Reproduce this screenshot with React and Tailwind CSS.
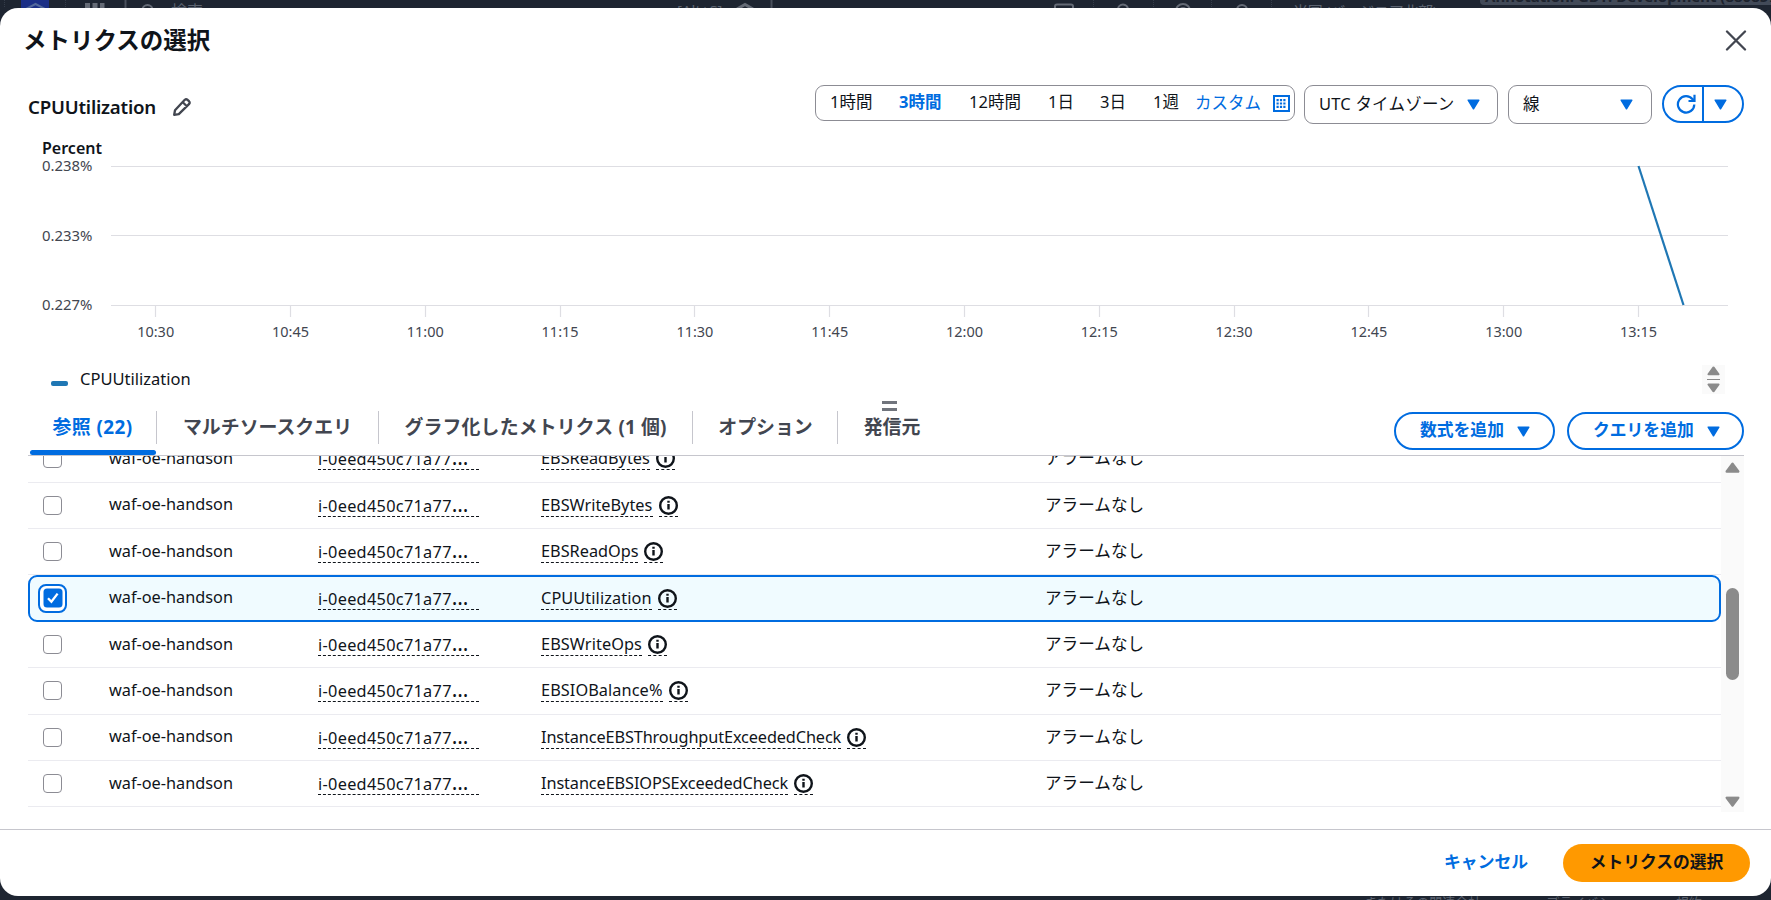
import React, { useState } from 'react';

const METRICS = [
  { name: 'EBSReadBytes', width: 'w-[109px]' },
  { name: 'EBSWriteBytes', width: 'w-[112px]' },
  { name: 'EBSReadOps', width: 'w-[97px]' },
  { name: 'CPUUtilization', width: 'w-[111px] tracking-[0.1px]' },
  { name: 'EBSWriteOps', width: 'w-[101px] tracking-[0.08px]' },
  { name: 'EBSIOBalance%', width: 'w-[122px] tracking-[0.08px]' },
  { name: 'InstanceEBSThroughputExceededCheck', width: 'w-[300px] tracking-[-0.12px]' },
  { name: 'InstanceEBSIOPSExceededCheck', width: 'w-[247px] tracking-[-0.1px]' },
];

const RANGES = [
  { label: '1時間', width: 'w-[69px]' },
  { label: '3時間', width: 'w-[70px]' },
  { label: '12時間', width: 'w-[79px]' },
  { label: '1日', width: 'w-[52px]' },
  { label: '3日', width: 'w-[53px]' },
  { label: '1週', width: 'w-[42px]' },
];

const TABS = [
  { label: '参照 (22)', width: 'w-[127px] pr-[2px] tracking-[0.4px]' },
  { label: 'マルチソースクエリ', width: 'w-[222px] pr-px' },
  { label: 'グラフ化したメトリクス (1 個)', width: 'w-[314px] pr-px tracking-[0.15px]' },
  { label: 'オプション', width: 'w-[145px]' },
  { label: '発信元', width: 'w-[108px]' },
];

const TIMES = ['10:30', '10:45', '11:00', '11:15', '11:30', '11:45', '12:00', '12:15', '12:30', '12:45', '13:00', '13:15'];

function Caret({ className = '' }) {
  return (
    <svg className={`shrink-0 ${className}`} width="13" height="11" viewBox="0 0 13 11" fill="currentColor" stroke="currentColor" strokeWidth="1.5" strokeLinejoin="round">
      <path d="M1.2 1.2h10.6L6.5 9.8z" />
    </svg>
  );
}

function ScrollArrow({ down = false, size = 15 }) {
  return (
    <svg className={down ? 'rotate-180' : ''} width={size} height={size * 0.75} viewBox="0 0 16 12" fill="#8b8b8b" stroke="#8b8b8b" strokeWidth="2.5" strokeLinejoin="round">
      <path d="M8 1.8 14.2 10.2H1.8z" />
    </svg>
  );
}

function InfoIcon() {
  return (
    <svg className="shrink-0" width="19" height="19" viewBox="0 0 19 19" fill="none" stroke="#0f141a" strokeWidth="2.4">
      <circle cx="9.5" cy="9.5" r="8.3" />
      <path d="M9.5 8v5.6M9.5 4.7v2.1" />
    </svg>
  );
}

function Checkbox({ checked }) {
  if (checked) {
    return (
      <span className="-ml-[5px] flex size-[29px] items-center justify-center rounded-[8px] border-[2.5px] border-[#006ce0] bg-white">
        <svg width="20" height="20" viewBox="0 0 20 20">
          <rect x="0.5" y="0.5" width="19" height="19" rx="3.5" fill="#006ce0" />
          <path d="m5 10.2 3.4 3.6 6.2-8.2" fill="none" stroke="#fff" strokeWidth="2.3" />
        </svg>
      </span>
    );
  }
  return <span className="block size-[19px] rounded-[4px] border border-[#8c8c94] bg-white" />;
}

function BackgroundNav() {
  return (
    <div className="relative h-2 overflow-hidden text-[13px] leading-none text-[#5c6370]">
      <svg className="absolute left-0 top-0" width="1771" height="8" fill="none" stroke="#656b76" strokeWidth="2">
        <rect x="21" y="-16" width="28" height="26" rx="3" fill="#1b2f86" stroke="none" />
        <path d="m26 9 9.500-5L45 9" stroke="#53699b" />
        <path d="M85 5.500h5M92.500 5.500h5M100 5.500h4.500" strokeWidth="5" />
        <path d="M125.500-2v12M771.500-2v12" stroke="#4a515d" />
        <circle cx="147.500" cy="10" r="5" />
        <path d="m737 9 8-4.500 8 4.500" strokeWidth="3" />
        <rect x="1055" y="4.500" width="18" height="12" rx="2" />
        <circle cx="1123" cy="9.500" r="5" />
        <circle cx="1183" cy="11" r="7" />
        <circle cx="1183" cy="11" r="3" />
        <circle cx="1242" cy="10" r="5" />
        <path d="M4.500 0v8M65.500 0v8M1093.500 0v8M1153.500 0v8M1211.500 0v8M1271.500 0v8" stroke="#343c49" strokeWidth="1" strokeDasharray="1 1" />
      </svg>
      <span className="absolute left-[171px] top-[3px] text-[16px]">検索</span>
      <span className="absolute left-[677px] top-[3px] text-[15px]">[Alt+S]</span>
      <span className="absolute left-[1293px] top-[4px] text-[15px] tracking-[-0.3px] whitespace-nowrap">米国 (バージニア北部)</span>
      <div className="absolute right-0 top-0 h-[5px] w-[291px] overflow-hidden rounded-bl-[4px] bg-[#424a58]">
        <span className="absolute -top-[11px] left-[5px] text-[15px] font-bold whitespace-nowrap text-[#1c222d]">Annotation: GDT: Development (88085784)</span>
      </div>
    </div>
  );
}

function MetricChart() {
  return (
    <svg className="block" width="1771" height="210" viewBox="0 140 1771 210">
      <text x="42" y="153.500" fontSize="15.500" fontWeight="600" fill="#0f141a" textLength="60" lengthAdjust="spacingAndGlyphs">Percent</text>
      <g fontSize="14" fill="#424650">
        {['0.238%', '0.233%', '0.227%'].map((value, i) => (
          <text key={value} x="42" y={171 + i * 69.5} textLength="50.500" lengthAdjust="spacingAndGlyphs">{value}</text>
        ))}
        {TIMES.map((time, i) => (
          <text key={time} x={155.7 + i * 134.8} y="337" textAnchor="middle" textLength="37" lengthAdjust="spacingAndGlyphs">{time}</text>
        ))}
      </g>
      <g stroke="#dedee3" strokeWidth="1.200">
        <path d="M111 166.500H1728M111 235.500H1728M111 305.500H1728" />
        {TIMES.map((time, i) => (
          <path key={time} d={`M${Math.round(155.2 + i * 134.8) + 0.5} 306v11`} />
        ))}
      </g>
      <path d="M1638.500 166 1683.500 305" fill="none" stroke="#1f77b4" strokeWidth="2.200" />
    </svg>
  );
}

function Toolbar() {
  const [range, setRange] = useState('3時間');
  return (
    <div className="flex h-[68px] items-start pt-[13px] pl-7 pr-[27px] text-[16.5px]">
      <h2 className="flex h-[45px] w-[787px] items-center gap-[18px] text-[18.7px] font-semibold">
        <span className="w-[127px] tracking-[-0.22px] whitespace-nowrap">CPUUtilization</span>
        <svg className="-mt-[2px]" width="18" height="18" viewBox="0 0 18 18" fill="none" stroke="#424650" strokeWidth="2.300" strokeLinejoin="round">
          <path d="M1.200 16.800 2 12.300 11.800 1.800Q13 .8 14.500 1.800L16 3.200Q17.200 4.500 16.200 5.900L5.800 16.100ZM9.800 4.200l4 4" />
        </svg>
      </h2>
      <div className="flex h-[36px] w-[480px] rounded-[9px] border border-[#8c8c94] pl-[14px]">
        {RANGES.map(({ label, width }) => (
          <button
            key={label}
            onClick={() => setRange(label)}
            className={`${width} shrink-0 pb-[1px] text-left whitespace-nowrap ${range === label ? 'font-bold text-[#006ce0]' : ''}`}
          >
            {label}
          </button>
        ))}
        <span className="w-[78px] leading-[33px] whitespace-nowrap text-[#006ce0]">カスタム</span>
        <svg className="mt-[9px] shrink-0" width="17" height="17" viewBox="0 0 17 17">
          <rect x="1" y="1" width="15" height="15" fill="none" stroke="#006ce0" strokeWidth="2" />
          <path d="M3.500 5.200h10M3.500 8.500h10M3.500 11.800h10" stroke="#006ce0" strokeWidth="2.200" strokeDasharray="2.200 1.200" />
        </svg>
      </div>
      <button className="ml-[9px] flex h-[39px] w-[194px] items-center rounded-[9px] border border-[#8c8c94] pl-[14px] pr-[17px]">
        <span className="tracking-[0.2px] whitespace-nowrap">UTC タイムゾーン</span>
        <Caret className="ml-auto text-[#006ce0]" />
      </button>
      <button className="ml-[10px] flex h-[39px] w-[144px] items-center justify-between rounded-[9px] border border-[#8c8c94] pl-[14px] pr-[18px]">
        線
        <Caret className="text-[#006ce0]" />
      </button>
      <div className="ml-[10px] flex h-[38px] w-[82px] rounded-full border-2 border-[#006ce0] text-[#006ce0]">
        <button className="flex w-[40px] items-center justify-center border-r-2 border-[#006ce0] pl-[5px]">
          <svg width="20" height="20" viewBox="0 0 20 20" fill="none" stroke="currentColor" strokeWidth="2.200">
            <path d="M18.300 10.500A8.200 8.200 0 1 1 16.600 5.300L17.800 7M18.500.7V7H12.500" />
          </svg>
        </button>
        <button className="flex flex-1 items-center pl-[10px]">
          <Caret />
        </button>
      </div>
    </div>
  );
}

function Legend() {
  return (
    <div className="flex h-[50px] items-start pl-[51px] pr-[46px] pt-[15px]">
      <span className="mt-4 h-[5px] w-[17px] rounded-[2px] bg-[#1f77b4]" />
      <span className="ml-[12px] text-[16.500px] leading-[27px]">CPUUtilization</span>
      <div className="ml-auto flex h-[29px] w-[23px] flex-col items-center justify-between bg-[#fafafa] py-px">
        <ScrollArrow size={13} />
        <span className="h-px w-[13px] bg-[#8b8b8b]" />
        <ScrollArrow down size={13} />
      </div>
    </div>
  );
}

function TabBar() {
  const [active, setActive] = useState(0);
  return (
    <div className="relative ml-7 mr-[27px] flex h-[56px] border-b border-[#c6c6cd] pl-[2px]">
      {TABS.map(({ label, width }, i) => (
        <button
          key={label}
          onClick={() => setActive(i)}
          className={`${width} relative flex h-[55px] shrink-0 items-center justify-center text-[18.900px] font-bold whitespace-nowrap ${active === i ? 'text-[#006ce0]' : 'text-[#424650]'}`}
        >
          {label}
          {i < TABS.length - 1 && <span className="absolute right-0 top-[11px] h-[33px] w-px bg-[#c6c6cd]" />}
          {active === i && <span className="absolute bottom-0 left-0 h-[5px] w-[126px] rounded-[3px] bg-[#006ce0]" />}
        </button>
      ))}
      <span className="absolute left-[854px] top-[1px] h-[10px] w-[15px] border-y-[3px] border-[#71757d]" />
      <div className="ml-auto flex gap-3 pt-3 text-[16.800px] font-bold text-[#006ce0]">
        <button className="flex h-[38px] w-[161px] items-center gap-[13px] rounded-full border-2 border-[#006ce0] pb-[2px] pl-[24px]">
          数式を追加 <Caret className="mt-[2px]" />
        </button>
        <button className="flex h-[38px] w-[177px] items-center gap-[13px] rounded-full border-2 border-[#006ce0] pb-[2px] pl-[24px]">
          クエリを追加 <Caret className="mt-[2px]" />
        </button>
      </div>
    </div>
  );
}

function MetricRow({ name, width, selected, onToggle }) {
  return (
    <div
      onClick={onToggle}
      className={`flex h-[46.400px] items-center ${selected ? 'rounded-[9px] border-2 border-[#006ce0] bg-[#f0fbff] pb-px pl-[13px]' : 'border-b border-[#ebebf0] pb-[0.5px] pl-[15px]'}`}
    >
      <div className="w-[66px]"><Checkbox checked={selected} /></div>
      <span className="-mt-px w-[209px] whitespace-nowrap">waf-oe-handson</span>
      <div className="w-[223px]">
        <span className="block h-[23px] w-[161px] border-b border-dashed border-[#0f141a] leading-[22px] whitespace-nowrap">
          <span className="tracking-[0.3px]">i-0eed450c71a77</span><span className="text-[21px] leading-none">…</span>
        </span>
      </div>
      <div className="flex w-[504px] items-center gap-[6px]">
        <span className={`${width} block h-[23px] border-b border-dashed border-[#0f141a] leading-[22px] whitespace-nowrap`}>{name}</span>
        <span className="flex h-[23px] items-center border-b border-dashed border-[#0f141a] pt-px"><InfoIcon /></span>
      </div>
      <span className="text-[16.600px] whitespace-nowrap">アラームなし</span>
    </div>
  );
}

function MetricTable() {
  const [selected, setSelected] = useState('CPUUtilization');
  return (
    <div className="ml-7 mr-[27px] flex h-[373px] items-start overflow-hidden">
      <div className="-mt-[19.700px] w-[1693px] text-[16.300px]">
        {METRICS.map(({ name, width }) => (
          <MetricRow
            key={name}
            name={name}
            width={width}
            selected={selected === name}
            onToggle={() => setSelected(name)}
          />
        ))}
      </div>
      <div className="flex h-[356px] w-[23px] flex-col items-center bg-[#fafafa] pb-[5px] pt-[6px]">
        <ScrollArrow />
        <span className="mt-[115px] h-[92px] w-[13px] rounded-full bg-[#8b8b8b]" />
        <span className="mt-auto"><ScrollArrow down /></span>
      </div>
    </div>
  );
}

export default function App() {
  return (
    <div className="h-[900px] w-[1771px] overflow-hidden bg-[#1e2531] font-['Noto_Sans','Noto_Sans_CJK_JP',sans-serif] text-[#0f141a]">
      <BackgroundNav />
      <div className="flex h-[888px] flex-col overflow-hidden rounded-[18px] bg-white">
        <div className="flex h-[64px] shrink-0 items-center justify-between pl-[23px] pr-[24px]">
          <h1 className="pt-px text-[23.500px] font-bold">メトリクスの選択</h1>
          <svg width="22" height="22" viewBox="0 0 22 22" stroke="#424650" strokeWidth="2.300" strokeLinecap="round">
            <path d="M2 2.500 20 20.500M20 2.500 2 20.500" />
          </svg>
        </div>
        <Toolbar />
        <MetricChart />
        <Legend />
        <TabBar />
        <MetricTable />
        <div className="flex h-[67px] items-start justify-end border-t border-[#c6c6cd] pr-[21px] pt-[14px] text-[16.800px] font-bold">
          <button className="mr-[35px] h-[36px] text-[#006ce0]">キャンセル</button>
          <button className="h-[38px] w-[187px] rounded-full bg-[#ff9900] pb-[2px]">メトリクスの選択</button>
        </div>
      </div>
      <div className="flex h-1 justify-end gap-[52px] overflow-hidden pr-[69px] text-[13px] leading-[12px] text-[#5c6370]">
        <span>またはその関連会社。</span>
        <span>プライバシー</span>
        <span>規約</span>
      </div>
    </div>
  );
}
